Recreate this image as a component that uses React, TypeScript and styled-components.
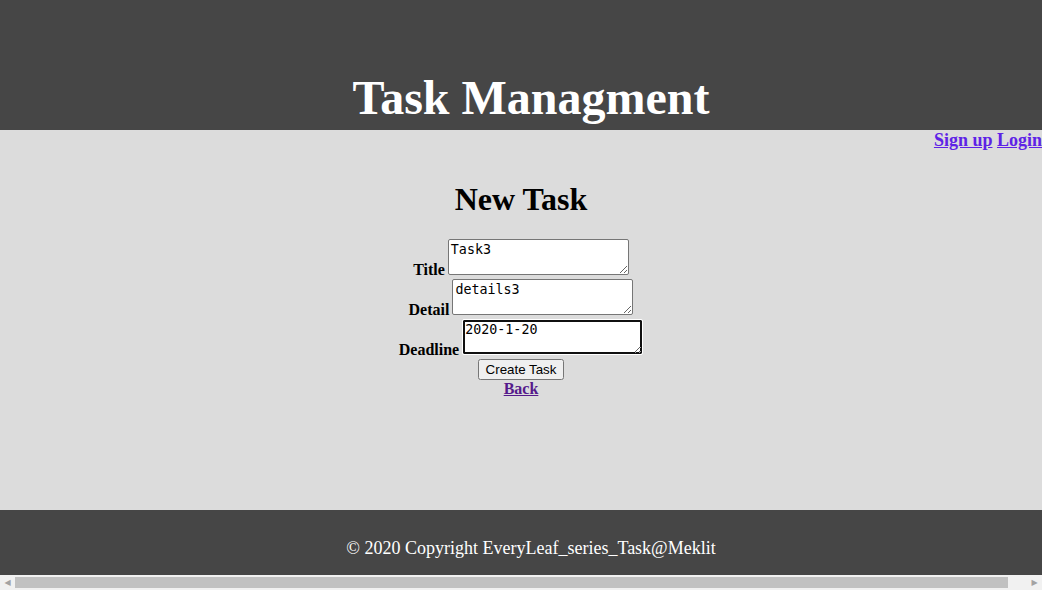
import React from 'react'
import styled, { createGlobalStyle } from 'styled-components'

const GlobalStyle = createGlobalStyle`
  body {
    margin: 0;
    font-family: 'Liberation Serif', 'Times New Roman', serif;
    background-color: #dcdcdc;
  }
`

const StyledHeader = styled.header`
  box-sizing: border-box;
  height: 130px;
  padding: 70px 0 0 20px;
  background-color: #464646;
  text-align: center;
`

const StyledTitle = styled.h1`
  margin: 0;
  color: white;
  font-size: 48px;
  font-weight: bold;
`

const StyledNav = styled.nav`
  text-align: right;
  font-size: 18px;
  font-weight: bold;
`

const StyledNavLink = styled.a`
  color: #5e22e6;
  text-decoration: underline;
`

const StyledMain = styled.main`
  box-sizing: border-box;
  height: 359px;
  padding-top: 30px;
  text-align: center;
`

const StyledHeading = styled.h2`
  margin: 0 0 21px;
  font-size: 32px;
  font-weight: bold;
`

const StyledField = styled.div`
  font-size: 16px;
  font-weight: bold;
`

const StyledTextArea = styled.textarea<{ $focused?: boolean }>`
  box-sizing: border-box;
  width: 181px;
  height: 36px;
  margin: 0 0 0 3px;
  font-family: 'DejaVu Sans Mono', monospace;
  font-size: 13.33px;
  border-radius: 2px;
  outline: none;
  border: 1px solid ${(props) => (props.$focused ? '#ffffff' : '#767676')};
  box-shadow: ${(props) => (props.$focused ? 'inset 0 0 0 2px #101010' : 'none')};
`

const StyledButton = styled.button`
  font-family: 'Liberation Sans', Arial, sans-serif;
  font-size: 13.33px;
`

const StyledBack = styled.a`
  display: block;
  color: #551a8b;
  font-size: 16px;
  font-weight: bold;
  text-decoration: underline;
`

const StyledFooter = styled.footer`
  box-sizing: border-box;
  height: 65px;
  padding-left: 20px;
  background-color: #464646;
  color: white;
  font-size: 18px;
  text-align: center;
  line-height: 76px;
`

const StyledScrollbar = styled.div`
  display: flex;
  align-items: center;
  height: 15px;
  background-color: #f1f1f1;
  color: #a3a3a3;
  font-family: 'DejaVu Sans', sans-serif;
  font-size: 8px;
`

const StyledArrow = styled.span`
  width: 15px;
  text-align: center;
`

const StyledThumb = styled.div`
  flex: 1;
  height: 11px;
  margin-right: 19px;
  background-color: #c1c1c1;
`

const fields = [
  { label: 'Title', value: 'Task3' },
  { label: 'Detail', value: 'details3' },
  { label: 'Deadline', value: '2020-1-20', focused: true },
]

const App = () => {
  return (
    <>
      <GlobalStyle />
      <StyledHeader>
        <StyledTitle>Task Managment</StyledTitle>
      </StyledHeader>
      <StyledNav>
        <StyledNavLink href="#">Sign up</StyledNavLink>{' '}
        <StyledNavLink href="#">Login</StyledNavLink>
      </StyledNav>
      <StyledMain>
        <StyledHeading>New Task</StyledHeading>
        <form onSubmit={(e) => e.preventDefault()}>
          {fields.map((field) => (
            <StyledField key={field.label}>
              <label>{field.label}</label>
              <StyledTextArea defaultValue={field.value} $focused={field.focused} />
            </StyledField>
          ))}
          <StyledButton type="submit">Create Task</StyledButton>
        </form>
        <StyledBack href="#">Back</StyledBack>
      </StyledMain>
      <StyledFooter>© 2020 Copyright EveryLeaf_series_Task@Meklit</StyledFooter>
      <StyledScrollbar>
        <StyledArrow>◀</StyledArrow>
        <StyledThumb />
        <StyledArrow>▶</StyledArrow>
      </StyledScrollbar>
    </>
  )
}

export default App
